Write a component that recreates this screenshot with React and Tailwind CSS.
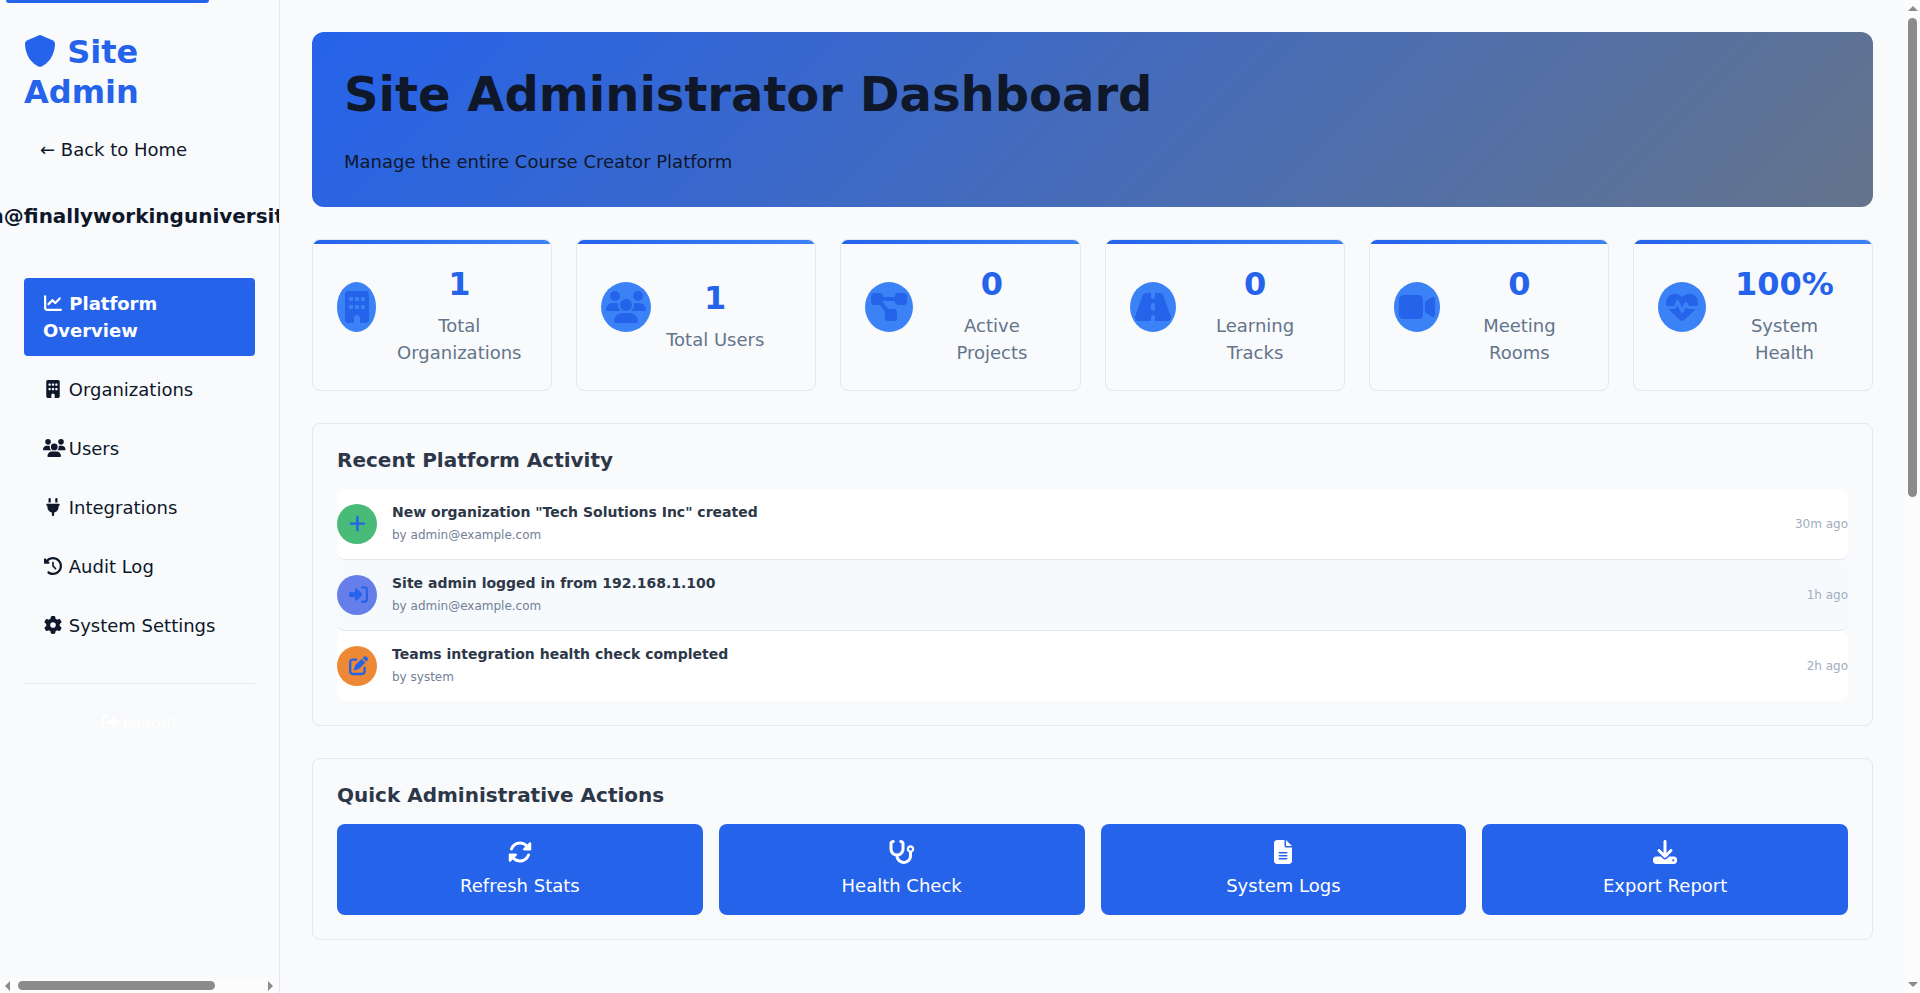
import React from "react";
import {
  FaShield, FaChartLine, FaBuilding, FaUsers, FaPlug, FaClockRotateLeft, FaGear,
  FaRightFromBracket, FaRightToBracket, FaDiagramProject, FaRoad, FaVideo, FaHeartPulse,
  FaPlus, FaPenToSquare, FaRotate, FaStethoscope, FaFileLines, FaDownload,
} from "react-icons/fa6";

const NAV = [
  { label: "Platform Overview", icon: FaChartLine, size: "w-[18px]", active: true },
  { label: "Organizations", icon: FaBuilding, size: "w-[18px]" },
  { label: "Users", icon: FaUsers, size: "w-[22.5px]", wide: true },
  { label: "Integrations", icon: FaPlug, size: "w-[18px]" },
  { label: "Audit Log", icon: FaClockRotateLeft, size: "w-[18px]" },
  { label: "System Settings", icon: FaGear, size: "w-[18px]" },
];

const STATS = [
  { value: "1", label: "Total Organizations", icon: FaBuilding, size: "w-6" },
  { value: "1", label: "Total Users", icon: FaUsers, size: "w-10" },
  { value: "0", label: "Active Projects", icon: FaDiagramProject, size: "w-9" },
  { value: "0", label: "Learning Tracks", icon: FaRoad, size: "w-9" },
  { value: "0", label: "Meeting Rooms", icon: FaVideo, size: "w-9" },
  { value: "100%", label: "System Health", icon: FaHeartPulse, size: "w-8" },
];

const ACTIVITY = [
  { title: 'New organization "Tech Solutions Inc" created', by: "by admin@example.com", time: "30m ago", icon: FaPlus, size: "w-[16.8px]", row: "bg-white border-[#e2e8f0]", dot: "bg-[#48bb78]" },
  { title: "Site admin logged in from 192.168.1.100", by: "by admin@example.com", time: "1h ago", icon: FaRightToBracket, size: "w-[19.2px]", row: "bg-[#f7fafc] border-[#e2e8f0]", dot: "bg-[#667eea]" },
  { title: "Teams integration health check completed", by: "by system", time: "2h ago", icon: FaPenToSquare, size: "w-[19.2px]", row: "bg-white border-transparent", dot: "bg-[#ed8936]" },
];

const ACTIONS = [
  { label: "Refresh Stats", icon: FaRotate, size: "w-6" },
  { label: "Health Check", icon: FaStethoscope, size: "w-[27px]" },
  { label: "System Logs", icon: FaFileLines, size: "w-[18px]" },
  { label: "Export Report", icon: FaDownload, size: "w-6" },
];

function Sidebar() {
  return (
    <aside className="flex h-full w-[280px] shrink-0 flex-col overflow-hidden border-r border-[#e2e8f0]">
      <div className="flex-1 px-6 pt-8">
        <h2 className="text-[32px] leading-10 font-bold text-[#2563eb]">
          <FaShield className="inline size-8 align-[-4px]" /> Site Admin
        </h2>
        <div className="mt-6 px-4 leading-[27px]">← Back to Home</div>
        <div className="mt-10 flex h-[27px] justify-center text-[20px] leading-[27px] font-bold">
          <span className="whitespace-nowrap">admin@finallyworkinguniversity.edu</span>
        </div>
        <nav className="mt-12 flex flex-col gap-2">
          {NAV.map(({ label, icon: Icon, size, active, wide }) => (
            <a
              key={label}
              className={
                active
                  ? "rounded bg-[#2563eb] py-3 pr-4 pl-[19px] leading-[27px] font-bold text-white"
                  : "rounded py-3 pr-4 pl-[19px] leading-[27px]"
              }
            >
              <span className={`inline-flex h-[18px] w-5 align-[-2.25px] ${wide ? "justify-start" : "justify-center"}`}>
                <Icon className={`h-[18px] shrink-0 ${size}`} />
              </span>{" "}
              {label}
            </a>
          ))}
        </nav>
        <div className="mt-8 border-t border-[#e2e8f0] pt-[27px] text-center text-[16px] leading-6 text-white">
          <FaRightFromBracket className="inline size-4 align-[-2px]" /> Logout
        </div>
      </div>
      <div className="flex h-[15px] items-center bg-[#fcfcfc] pr-[6px] pl-[5px]">
        <div className="h-0 w-0 border-y-[5px] border-r-[5px] border-y-transparent border-r-[#8b8b8b]" />
        <div className="ml-2 h-[9px] w-[197px] rounded-full bg-[#8b8b8b]" />
        <div className="ml-auto h-0 w-0 border-y-[5px] border-l-[5px] border-y-transparent border-l-[#8b8b8b]" />
      </div>
    </aside>
  );
}

function StatCard({ value, label, icon: Icon, size }) {
  return (
    <div className="relative flex h-[152px] min-w-0 items-center gap-[15px] overflow-hidden rounded-lg border border-[#e2e8f0] px-6">
      <div className="absolute inset-x-0 top-0 h-1 bg-linear-to-r from-[#2563eb] to-[#3b82f6]" />
      <div className="mb-4 flex h-[50px] w-[50px] items-center justify-center rounded-[50%] bg-[#3b82f6] text-[#2563eb]">
        <Icon className={`h-8 shrink-0 ${size}`} />
      </div>
      <div className="text-center">
        <div className="mb-2 text-[32px] leading-10 font-bold text-[#2563eb]">{value}</div>
        <div className="leading-[27px] text-[#64748b]">{label}</div>
      </div>
    </div>
  );
}

function Panel({ title, children }) {
  return (
    <section className="mt-8 rounded-lg border border-[#e2e8f0] p-6">
      <h3 className="mb-4 text-[20px] leading-[25px] font-bold text-[#2d3748]">{title}</h3>
      {children}
    </section>
  );
}

export default function App() {
  return (
    <div className="relative flex h-[993px] w-full overflow-hidden bg-[#f8fafc] font-['DejaVu_Sans',sans-serif] text-[18px] text-[#0f172a]">
      <div className="absolute top-0 left-[6px] h-[3px] w-[203px] rounded-b bg-[#2563eb]" />
      <Sidebar />
      <main className="min-w-0 flex-1 p-8">
        <header className="rounded-xl bg-[linear-gradient(135deg,#2563eb_0%,#64748b_100%)] p-8">
          <h1 className="mb-6 text-[48px] leading-[60px] font-bold">Site Administrator Dashboard</h1>
          <p className="leading-[27px]">Manage the entire Course Creator Platform</p>
        </header>
        <div className="mt-8 grid grid-cols-6 gap-6">
          {STATS.map((s) => <StatCard key={s.label} {...s} />)}
        </div>
        <Panel title="Recent Platform Activity">
          <div>
            {ACTIVITY.map(({ title, by, time, icon: Icon, size, row, dot }) => (
              <div key={title} className={`flex h-[71px] items-center rounded-lg border-b last:h-[70px] last:border-b-0 ${row}`}>
                <div className={`flex size-10 items-center justify-center rounded-full text-[#2563eb] ${dot}`}>
                  <span className="flex w-4 justify-start">
                    <Icon className={`h-[19.2px] shrink-0 ${size}`} />
                  </span>
                </div>
                <div className="ml-[15px] flex-1 pb-[3px]">
                  <div className="text-[14px] leading-[21px] font-bold text-[#2d3748]">{title}</div>
                  <div className="mt-[3px] text-[12px] leading-[18px] text-[#718096]">{by}</div>
                </div>
                <div className="text-[12px] leading-[18px] text-[#a0aec0]">{time}</div>
              </div>
            ))}
          </div>
        </Panel>
        <Panel title="Quick Administrative Actions">
          <div className="grid grid-cols-4 gap-4">
            {ACTIONS.map(({ label, icon: Icon, size }) => (
              <button key={label} className="flex flex-col items-center gap-2 rounded-lg bg-[#2563eb] p-4 leading-[27px] text-white">
                <Icon className={`h-6 ${size}`} />
                {label}
              </button>
            ))}
          </div>
        </Panel>
      </main>
      <div className="flex w-[15px] shrink-0 flex-col items-center bg-[#fcfcfc] py-[6px]">
        <div className="h-0 w-0 border-x-[5px] border-b-[5px] border-x-transparent border-b-[#8b8b8b]" />
        <div className="mt-[7px] h-[479px] w-[9px] rounded-full bg-[#8b8b8b]" />
        <div className="mt-auto h-0 w-0 border-x-[5px] border-t-[5px] border-x-transparent border-t-[#8b8b8b]" />
      </div>
    </div>
  );
}
